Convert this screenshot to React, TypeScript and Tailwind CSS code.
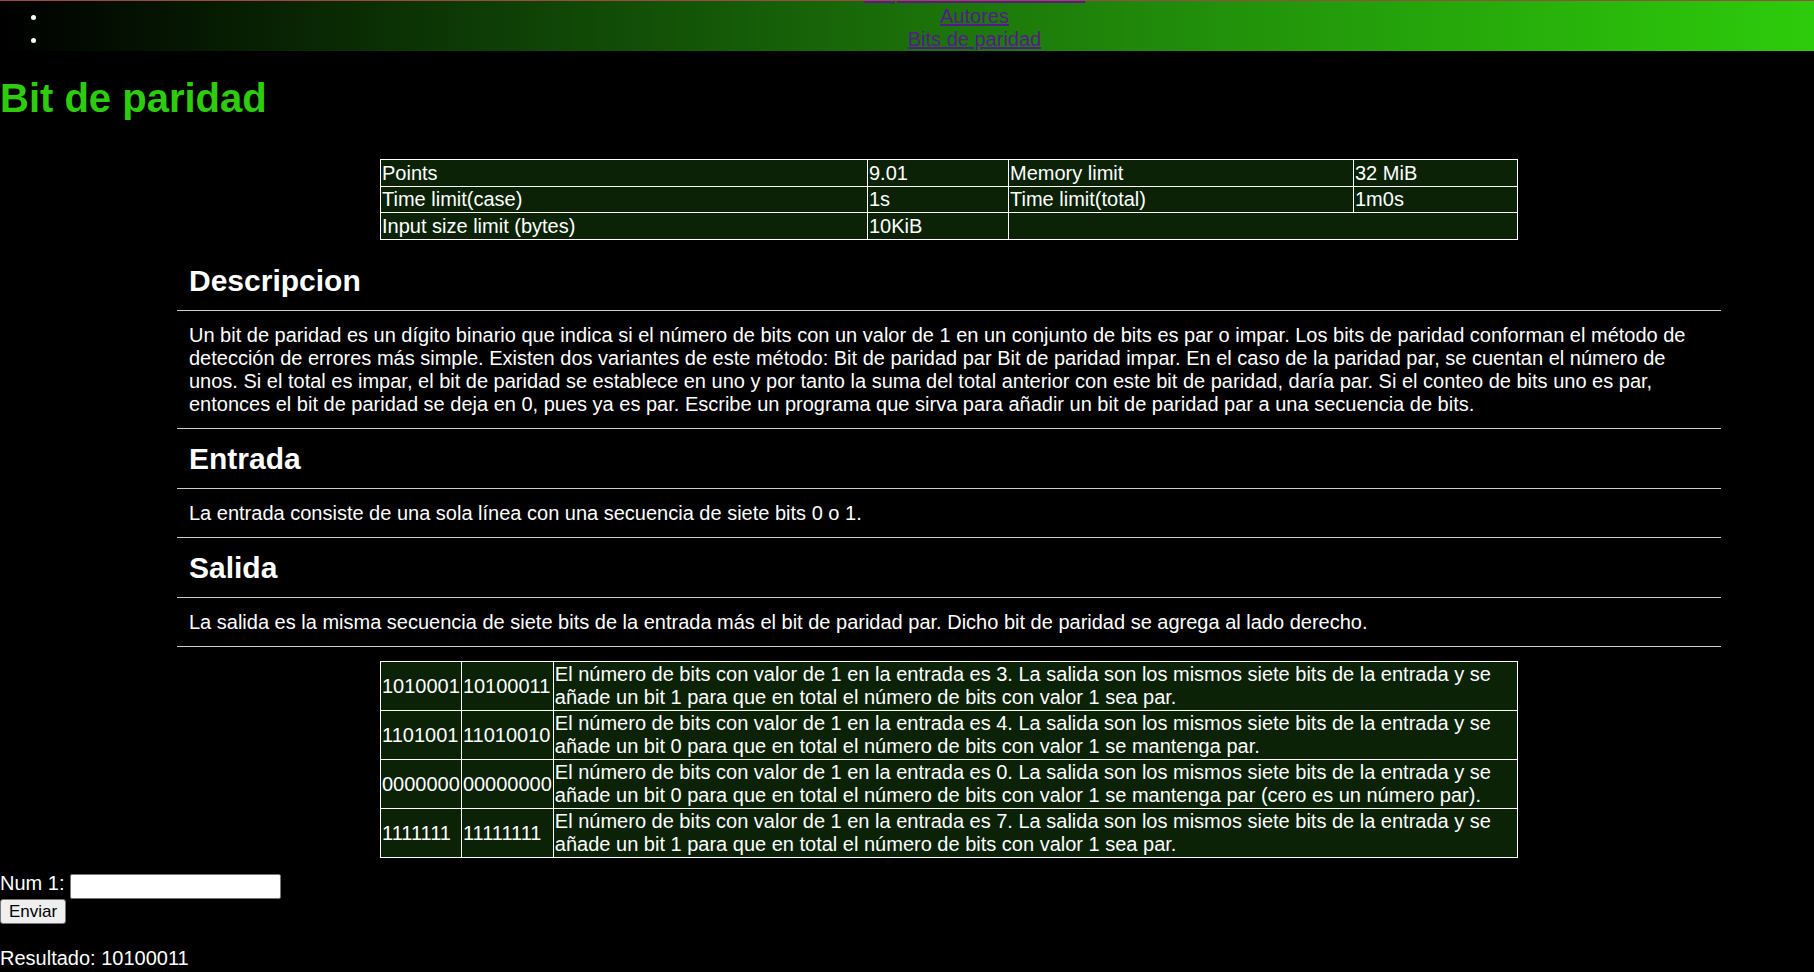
import { useState } from "react";

// Links in the top bar; the first one sits mostly above the visible strip
const NAV_LINKS = ["Mejores soluciones 2024", "Autores", "Bits de paridad"];

const EXAMPLES = [
    {
        input: "1010001",
        output: "10100011",
        note: "El número de bits con valor de 1 en la entrada es 3. La salida son los mismos siete bits de la entrada y se añade un bit 1 para que en total el número de bits con valor 1 sea par.",
    },
    {
        input: "1101001",
        output: "11010010",
        note: "El número de bits con valor de 1 en la entrada es 4. La salida son los mismos siete bits de la entrada y se añade un bit 0 para que en total el número de bits con valor 1 se mantenga par.",
    },
    {
        input: "0000000",
        output: "00000000",
        note: "El número de bits con valor de 1 en la entrada es 0. La salida son los mismos siete bits de la entrada y se añade un bit 0 para que en total el número de bits con valor 1 se mantenga par (cero es un número par).",
    },
    {
        input: "1111111",
        output: "11111111",
        note: "El número de bits con valor de 1 en la entrada es 7. La salida son los mismos siete bits de la entrada y se añade un bit 1 para que en total el número de bits con valor 1 sea par.",
    },
];

function addParity(bits: string) {
    const ones = bits.split("").filter((b) => b === "1").length;
    return bits + (ones % 2 === 0 ? "0" : "1");
}

export default function App() {
    const [value, setValue] = useState("");
    const [result, setResult] = useState("10100011");

    const cell = "border border-white px-px pt-[1.5px] pb-[0.5px] leading-[23.5px]";
    const exCell = "border border-white px-px py-px leading-[23px]";
    const heading =
        "border-b border-[#cccccc] px-[12px] pt-[13px] pb-[12px] text-[30px] font-bold leading-[34px]";
    const para = "border-b border-[#cccccc] px-[12px] pt-[13px] pb-[12px]";

    return (
        <div className="min-h-screen bg-black font-['Liberation_Sans',Arial,sans-serif] text-[20px] leading-[23px] text-white">
            {/* Top bar */}
            <nav className="h-[51px] overflow-hidden border-t border-[#9c4a44] bg-[linear-gradient(to_right,#000000_0%,#0f4406_30%,#1d7a0a_55%,#2dcc0b_100%)]">
                <ul className="-mt-[19px]">
                    {NAV_LINKS.map((label) => (
                        <li key={label} className="flex h-[23px]">
                            <span className="flex w-[135px] items-center pl-[31px]">
                                <span className="mt-[2px] h-[5px] w-[5px] rounded-full bg-white" />
                            </span>
                            <span className="flex-1 text-center">
                                <a href="#" className="text-[#551a8b] underline">
                                    {label}
                                </a>
                            </span>
                        </li>
                    ))}
                </ul>
            </nav>

            <h1 className="mt-[24px] text-[40px] font-bold leading-[46px] text-[#2ecc0e]">
                Bit de paridad
            </h1>

            <div className="ml-[177px] mt-[38px] w-[1544px]">
                {/* Limits */}
                <table className="mx-auto w-[1138px] border-collapse bg-[#0b2207]">
                    <tbody>
                        <tr>
                            <td className={`${cell} w-[487px]`}>Points</td>
                            <td className={`${cell} w-[141px]`}>9.01</td>
                            <td className={`${cell} w-[345px]`}>Memory limit</td>
                            <td className={cell}>32 MiB</td>
                        </tr>
                        <tr>
                            <td className={cell}>Time limit(case)</td>
                            <td className={cell}>1s</td>
                            <td className={cell}>Time limit(total)</td>
                            <td className={cell}>1m0s</td>
                        </tr>
                        <tr>
                            <td className={cell}>Input size limit (bytes)</td>
                            <td className={cell}>10KiB</td>
                            <td className={cell} colSpan={2}></td>
                        </tr>
                    </tbody>
                </table>

                <h2 className={`${heading} mt-[11.5px]`}>Descripcion</h2>
                <p className={para}>
                    Un bit de paridad es un dígito binario que indica si el
                    número de bits con un valor de 1 en un conjunto de bits es
                    par o impar. Los bits de paridad conforman el método de
                    detección de errores más simple. Existen dos variantes de
                    este método: Bit de paridad par Bit de paridad impar. En el
                    caso de la paridad par, se cuentan el número de unos. Si el
                    total es impar, el bit de paridad se establece en uno y por
                    tanto la suma del total anterior con este bit de paridad,
                    daría par. Si el conteo de bits uno es par, entonces el bit
                    de paridad se deja en 0, pues ya es par. Escribe un programa
                    que sirva para añadir un bit de paridad par a una secuencia
                    de bits.
                </p>

                <h2 className={heading}>Entrada</h2>
                <p className={para}>
                    La entrada consiste de una sola línea con una secuencia de
                    siete bits 0 o 1.
                </p>

                <h2 className={heading}>Salida</h2>
                <p className={para}>
                    La salida es la misma secuencia de siete bits de la entrada
                    más el bit de paridad par. Dicho bit de paridad se agrega al
                    lado derecho.
                </p>

                {/* Examples */}
                <table className="mx-auto mt-[14px] w-[1138px] border-collapse bg-[#0b2207]">
                    <tbody>
                        {EXAMPLES.map((ex) => (
                            <tr key={ex.input}>
                                <td className={exCell}>{ex.input}</td>
                                <td className={exCell}>{ex.output}</td>
                                <td className={exCell}>{ex.note}</td>
                            </tr>
                        ))}
                    </tbody>
                </table>
            </div>

            {/* Form */}
            <form
                onSubmit={(e) => {
                    e.preventDefault();
                    if (/^[01]{7}$/.test(value)) setResult(addParity(value));
                }}
            >
                <div className="mt-[14px] flex items-start gap-[6px]">
                    <span>Num 1:</span>
                    <input
                        type="text"
                        value={value}
                        onChange={(e) => setValue(e.target.value)}
                        className="mt-[1.5px] h-[25.5px] w-[211px] rounded-[2px] border border-[#767676] bg-white px-[2px] text-[16px] text-black outline-none"
                    />
                </div>
                <button
                    type="submit"
                    className="block h-[25px] w-[66px] rounded-[3px] border border-[#767676] bg-[#efefef] text-[17px] leading-[19px] text-black"
                >
                    Enviar
                </button>
            </form>

            <p className="mt-[23px]">Resultado: {result}</p>
        </div>
    );
}
